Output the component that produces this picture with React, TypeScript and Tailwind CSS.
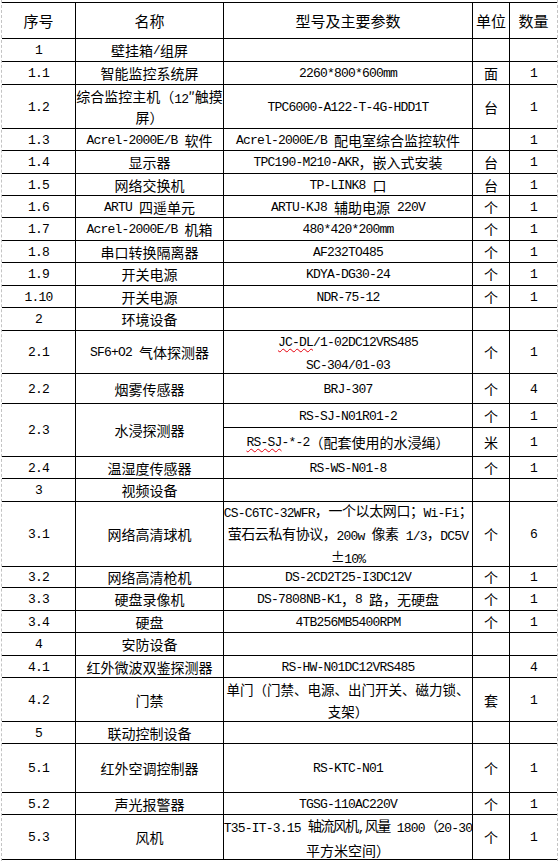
import type { ReactNode } from "react";

// ASCII runs are drawn in a narrow mono face so they take ~7px per char like the source sheet
const mono = "relative top-px font-['Liberation_Mono',monospace] text-[13px] tracking-[-0.8px] whitespace-pre";

const T = ({ t }: { t: string }) => (
  <>
    {t.split(/([\x00-\x7f]+)/).map((part, i) =>
      /^[\x00-\x7f]+$/.test(part) ? (
        <span key={i} className={mono}>
          {part}
        </span>
      ) : (
        <span key={i}>{part}</span>
      )
    )}
  </>
);

const Cell = ({
  children,
  last = false,
  className = "",
}: {
  children?: ReactNode;
  last?: boolean;
  className?: string;
}) => (
  <div
    className={`flex items-center justify-center text-center border-b border-black leading-[20px] whitespace-nowrap ${
      last ? "" : "border-r"
    } ${className}`}
  >
    {children}
  </div>
);

const row = (no: string, name: ReactNode, spec: ReactNode, unit = "", qty = "") => (
  <>
    <Cell>
      <T t={no} />
    </Cell>
    <Cell>{typeof name === "string" ? <T t={name} /> : name}</Cell>
    <Cell>{typeof spec === "string" ? <T t={spec} /> : spec}</Cell>
    <Cell>{unit}</Cell>
    <Cell last>
      <T t={qty} />
    </Cell>
  </>
);

const wavy = "underline decoration-wavy decoration-red-600 decoration-1 underline-offset-2";

export default function App() {
  return (
    <div className="min-h-[861px] w-[560px] bg-white text-black font-['Noto_Sans_CJK_SC',sans-serif] text-[14px]">
      <div className="ml-px w-[557px] min-h-[861px] border-x border-dashed border-[#c4c4c4] pt-[2px]">
        <div className="grid grid-cols-[74px_148px_249px_37px_47px] grid-rows-[36px_23px_23px_44px_22px_23px_22px_22px_23px_22px_23px_22px_23px_43px_30px_24px_29px_22px_23px_65px_21px_23px_22px_23px_22px_44px_22px_49px_22px_45px] border-t border-black">
          <Cell className="text-[15px]">序号</Cell>
          <Cell className="text-[15px]">名称</Cell>
          <Cell className="text-[15px]">型号及主要参数</Cell>
          <Cell className="text-[15px]">单位</Cell>
          <Cell last className="text-[15px]">数量</Cell>

          {row("1", "壁挂箱/组屏", "")}
          {row("1.1", "智能监控系统屏", "2260*800*600mm", "面", "1")}
          {row(
            "1.2",
            <div className="leading-[19px]">
              <T t="综合监控主机（12″触摸" />
              <br />
              屏）
            </div>,
            "TPC6000-A122-T-4G-HDD1T",
            "台",
            "1"
          )}
          {row("1.3", "Acrel-2000E/B 软件", "Acrel-2000E/B 配电室综合监控软件", "", "1")}
          {row("1.4", "显示器", "TPC190-M210-AKR，嵌入式安装", "台", "1")}
          {row("1.5", "网络交换机", "TP-LINK8 口", "台", "1")}
          {row("1.6", "ARTU 四遥单元", "ARTU-KJ8 辅助电源 220V", "个", "1")}
          {row("1.7", "Acrel-2000E/B 机箱", "480*420*200mm", "个", "1")}
          {row("1.8", "串口转换隔离器", "AF232TO485", "个", "1")}
          {row("1.9", "开关电源", "KDYA-DG30-24", "个", "1")}
          {row("1.10", "开关电源", "NDR-75-12", "个", "1")}

          {row("2", "环境设备", "")}
          {row(
            "2.1",
            "SF6+O2 气体探测器",
            <div>
              <span className={mono}>
                <span className={wavy}>JC-DL</span>/1-02DC12VRS485
              </span>
              <br />
              <T t="SC-304/01-03" />
            </div>,
            "个",
            "1"
          )}
          {row("2.2", "烟雾传感器", "BRJ-307", "个", "4")}

          <Cell className="row-span-2">
            <T t="2.3" />
          </Cell>
          <Cell className="row-span-2">水浸探测器</Cell>
          <Cell>
            <T t="RS-SJ-N01R01-2" />
          </Cell>
          <Cell>个</Cell>
          <Cell last>
            <T t="1" />
          </Cell>
          <Cell>
            <span className={mono}>
              <span className={wavy}>RS-SJ</span>-*-2
            </span>
            （配套使用的水浸绳）
          </Cell>
          <Cell>米</Cell>
          <Cell last>
            <T t="1" />
          </Cell>

          {row("2.4", "温湿度传感器", "RS-WS-N01-8", "个", "1")}

          {row("3", "视频设备", "")}
          {row(
            "3.1",
            "网络高清球机",
            <div className="tracking-[-0.4px]">
              <T t="CS-C6TC-32WFR，一个以太网口；Wi-Fi；" />
              <br />
              <T t="萤石云私有协议，200w 像素 1/3，DC5V" />
              <br />
              <T t="±10%" />
            </div>,
            "个",
            "6"
          )}
          {row("3.2", "网络高清枪机", "DS-2CD2T25-I3DC12V", "个", "1")}
          {row("3.3", "硬盘录像机", "DS-7808NB-K1，8 路，无硬盘", "个", "1")}
          {row("3.4", "硬盘", "4TB256MB5400RPM", "个", "1")}

          {row("4", "安防设备", "")}
          {row("4.1", "红外微波双鉴探测器", "RS-HW-N01DC12VRS485", "", "4")}
          {row(
            "4.2",
            "门禁",
            <div className="leading-[22px] text-[13.5px]">
              单门（门禁、电源、出门开关、磁力锁、
              <br />
              支架）
            </div>,
            "套",
            "1"
          )}

          {row("5", "联动控制设备", "")}
          {row("5.1", "红外空调控制器", "RS-KTC-N01", "个", "1")}
          {row("5.2", "声光报警器", "TGSG-110AC220V", "个", "1")}
          {row(
            "5.3",
            "风机",
            <div className="leading-[22px] tracking-[-1.5px]">
              <T t="T35-IT-3.15 轴流风机,风量 1800（20-30" />
              <br />
              <span className="tracking-normal">平方米空间）</span>
            </div>,
            "个",
            "1"
          )}
        </div>
      </div>
    </div>
  );
}
